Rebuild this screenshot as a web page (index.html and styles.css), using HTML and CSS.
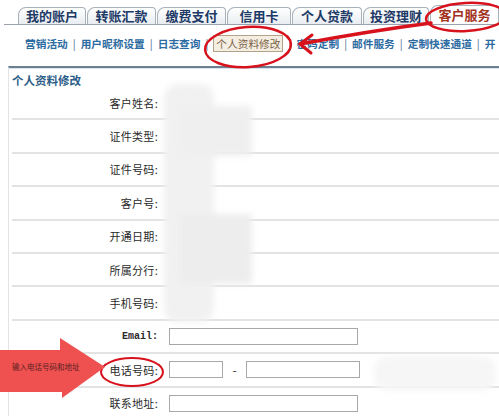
FILE: index.html
```html
<!DOCTYPE html>
<html lang="zh-CN">
<head>
  <meta charset="UTF-8" />
  <title>客户服务 - 个人资料修改</title>
  <link rel="stylesheet" href="styles.css">
</head>
<body>
  <div class="page">
    <div class="tabs">
      <div class="tab w68">我的账户</div>
      <div class="tab w69">转账汇款</div>
      <div class="tab w69">缴费支付</div>
      <div class="tab w64">信用卡</div>
      <div class="tab w70">个人贷款</div>
      <div class="tab w66">投资理财</div>
      <div class="tab w73 active">客户服务</div>
    </div>

    <div class="subnav">
      <span class="item">营销活动</span><span class="sep">|</span>
      <span class="item">用户昵称设置</span><span class="sep">|</span>
      <span class="item">日志查询</span><span class="sep">|</span>
      <span class="item current">个人资料修改</span><span class="sep">|</span>
      <span class="item">密码定制</span><span class="sep">|</span>
      <span class="item">邮件服务</span><span class="sep">|</span>
      <span class="item">定制快速通道</span><span class="sep">|</span>
      <span class="item">开</span>
    </div>

    <div class="panel">
      <h2 class="panel-title">个人资料修改</h2>
      <div class="form">
        <div class="row"><div class="label">客户姓名:</div><div class="value"></div></div>
        <div class="row"><div class="label">证件类型:</div><div class="value"></div></div>
        <div class="row"><div class="label">证件号码:</div><div class="value"></div></div>
        <div class="row"><div class="label">客户号:</div><div class="value"></div></div>
        <div class="row"><div class="label">开通日期:</div><div class="value"></div></div>
        <div class="row"><div class="label">所属分行:</div><div class="value"></div></div>
        <div class="row"><div class="label">手机号码:</div><div class="value"></div></div>
        <div class="row">
          <div class="label latin">Email:</div>
          <div class="value"><input class="field wide" type="text"></div>
        </div>
        <div class="row">
          <div class="label">电话号码:</div>
          <div class="value">
            <input class="field area" type="text">
            <span class="dash">-</span>
            <input class="field phone" type="text">
          </div>
        </div>
        <div class="row">
          <div class="label">联系地址:</div>
          <div class="value"><input class="field wide" type="text"></div>
        </div>
      </div>
    </div>

    <!-- blurred privacy masks -->
    <div class="mask m1"></div>
    <div class="mask m2"></div>
    <div class="mask m3"></div>
    <div class="mask m4"></div>

    <!-- red hand-drawn annotations -->
    <svg class="marks" width="499" height="416" viewBox="0 0 499 416">
      <ellipse cx="466" cy="17" rx="40" ry="14" fill="none" stroke="#d7121c" stroke-width="2.5" transform="rotate(-3 466 17)"/>
      <path d="M431 23 Q 370 31 300 44" fill="none" stroke="#d7121c" stroke-width="3.5" stroke-linecap="round"/>
      <path d="M312 35 L300 44 L311 53" fill="none" stroke="#d7121c" stroke-width="3" stroke-linecap="round" stroke-linejoin="round"/>
      <ellipse cx="248" cy="47" rx="43" ry="20" fill="none" stroke="#d7121c" stroke-width="2.5" transform="rotate(-4 248 47)"/>
      <ellipse cx="132" cy="372" rx="31" ry="14" fill="none" stroke="#d7121c" stroke-width="2"/>
      <polygon points="0,350 60,350 60,338 105,367 62,398 62,392 0,392" fill="#ef5050"/>
      <text x="12" y="370" class="arrow-text">输入电话号码和地址</text>
    </svg>
  </div>
</body>
</html>
```

FILE: styles.css
```css
body {
  margin: 0;
  background: #ffffff;
  font-family: "Noto Sans CJK SC", "Noto Sans", sans-serif;
}

.page {
  position: relative;
  width: 499px;
  height: 416px;
  overflow: hidden;
}

/* top tab bar */
.tabs {
  display: flex;
  align-items: flex-end;
  gap: 1px;
  height: 24px;
  padding-left: 14px;
  margin-left: 4px;
  border-bottom: 1px solid #9aa3ad;
}

.tab {
  height: 17px;
  box-sizing: border-box;
  border: 1px solid #a9b1bb;
  border-bottom: none;
  border-radius: 8px 4px 0 0;
  background: linear-gradient(#ffffff, #e9edf1);
  color: #1e3a66;
  font-size: 13px;
  font-weight: 700;
  line-height: 16px;
  text-align: center;
}

.tab.active {
  height: 19px;
  background: #ffffff;
  color: #a2331f;
  line-height: 18px;
}

.w64 { width: 64px; }
.w66 { width: 66px; }
.w68 { width: 68px; }
.w69 { width: 69px; }
.w70 { width: 70px; }
.w73 { width: 69px; }

/* second level navigation */
.subnav {
  display: flex;
  align-items: center;
  height: 34px;
  padding: 0 0 0 25px;
  margin-top: 1px;
  white-space: nowrap;
  font-size: 10.7px;
  font-weight: 700;
  color: #2c6ba1;
}

.sep {
  margin: 0 5px;
  font-weight: 400;
  color: #4a6f92;
}

.item.current {
  padding: 0 2px;
  border: 1px solid #b4a288;
  background: #f4eee2;
  color: #7b6146;
  font-weight: 400;
}

/* form panel */
.panel {
  margin: 6px 0 0 8px;
  border-top: 2px solid #6e7f90;
  box-shadow: inset 0 1px 0 #d9e5ee;
  border-left: 1px solid #e4e4e4;
}

.panel-title {
  margin: 0;
  height: 19px;
  padding: 5px 0 0 3px;
  box-sizing: border-box;
  font-size: 11.5px;
  font-weight: 700;
  color: #2d5e88;
  line-height: 14px;
}

.form {
  margin-left: 3px;
}

.row {
  display: flex;
  align-items: center;
  height: 33.4px;
  box-sizing: border-box;
  border-bottom: 2px solid #e3e3e3;
}

.label {
  width: 149px;
  padding-right: 3px;
  box-sizing: border-box;
  text-align: right;
  font-size: 11px;
  color: #2a2a2a;
  letter-spacing: 0.3px;
}

.label.latin {
  font-family: "Liberation Mono", monospace;
  font-size: 10px;
  font-weight: 700;
  letter-spacing: 0;
}

.value {
  display: flex;
  align-items: center;
  padding-left: 8px;
}

.field {
  height: 17px;
  box-sizing: border-box;
  margin: 0;
  padding: 0;
  border: 1px solid #a8a8a8;
  background: #ffffff;
}

.field.wide { width: 189px; }
.field.area { width: 54px; }
.field.phone { width: 114px; }

.dash {
  width: 23px;
  text-align: center;
  font-size: 12px;
  color: #333333;
}

/* privacy blur over the personal data */
.mask {
  position: absolute;
  filter: blur(3px);
  border-radius: 14px;
}

.m1 { left: 164px; top: 84px; width: 50px; height: 238px; background: #f1f1f1; }
.m2 { left: 180px; top: 106px; width: 72px; height: 50px; background: #efefef; border-radius: 4px; }
.m3 { left: 180px; top: 214px; width: 72px; height: 70px; background: #ededed; border-radius: 4px; }
.m4 { left: 374px; top: 356px; width: 122px; height: 35px; background: #f6f6f6; }

.marks {
  position: absolute;
  left: 0;
  top: 0;
  pointer-events: none;
}

.arrow-text {
  font-family: "Noto Sans CJK SC", sans-serif;
  font-size: 7.5px;
  fill: #5a2222;
}
```
